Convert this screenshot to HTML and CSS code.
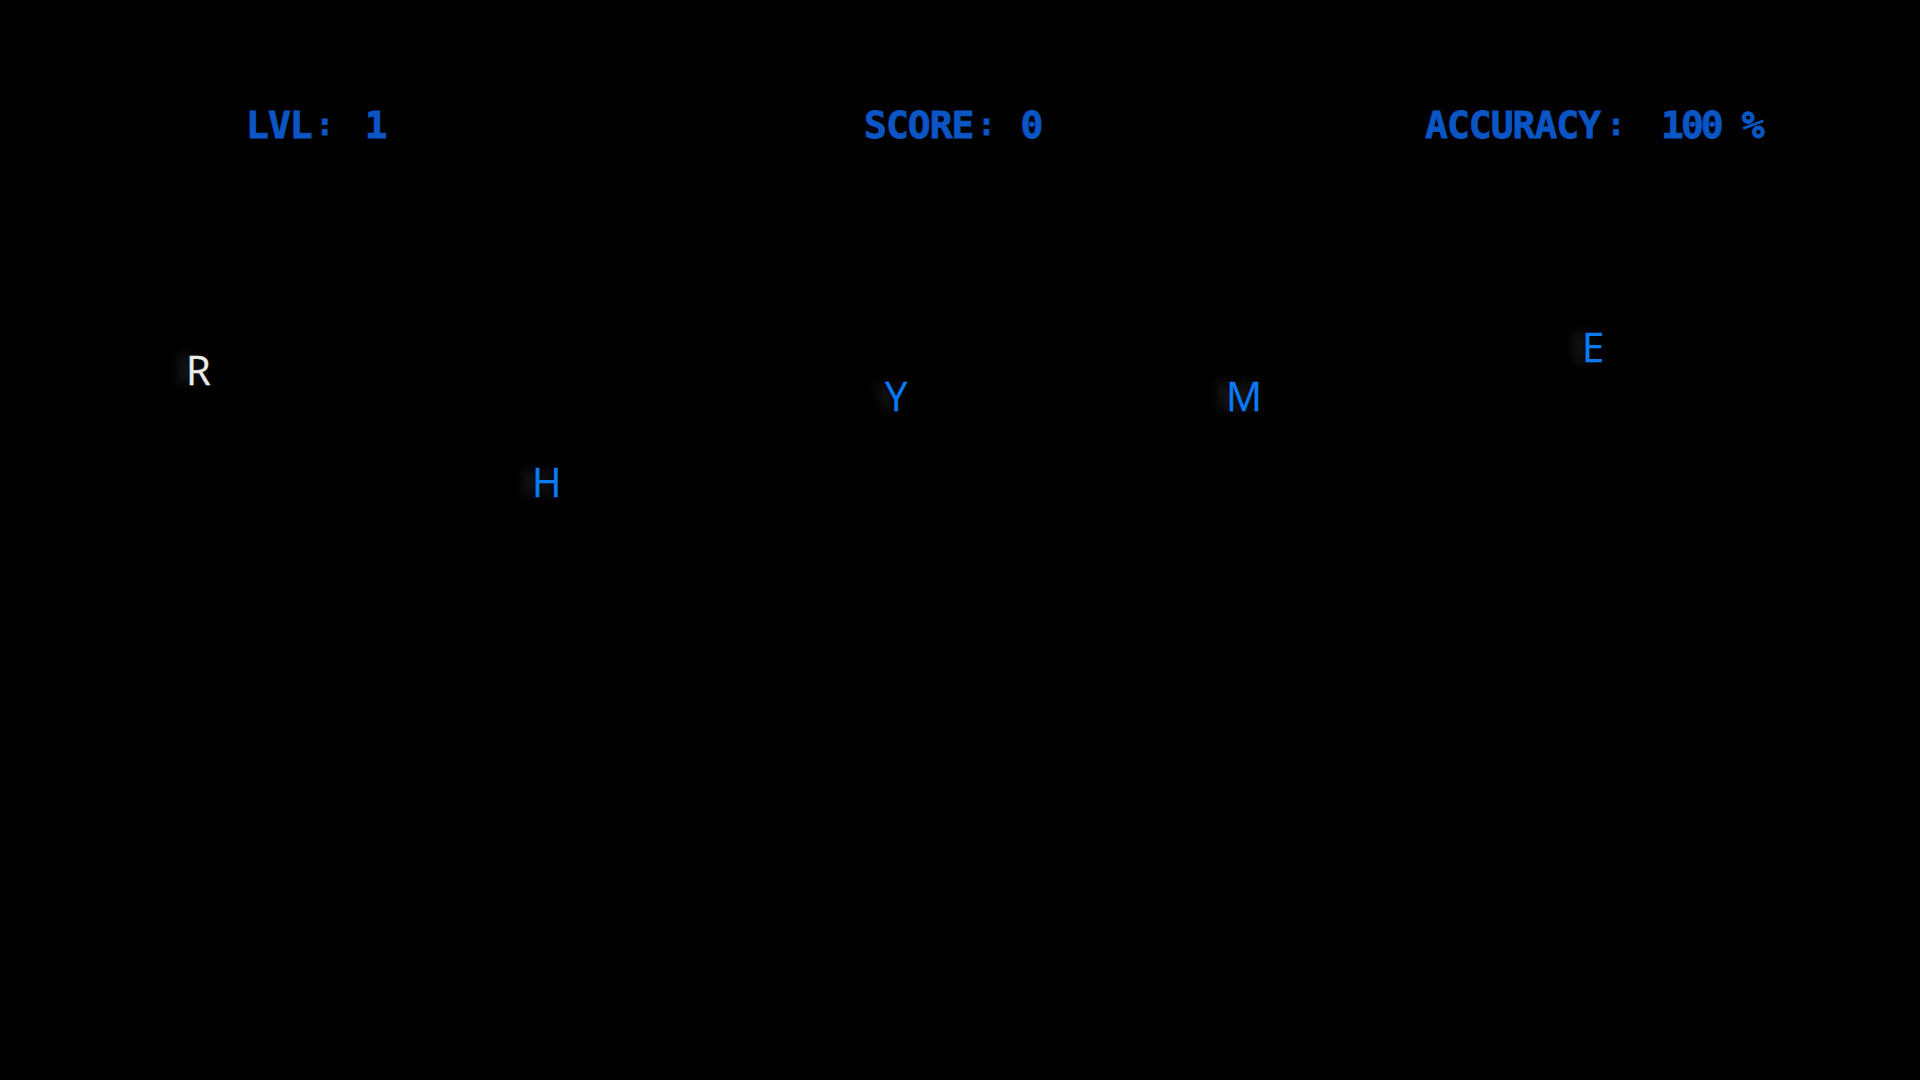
FILE: index.html

```html
<!DOCTYPE html>
<html lang="en">
<head>
    <meta charset="UTF-8">
    <title>Typing Game</title>
    <link rel="stylesheet" href="styles.css">
</head>
<body>
<div id="game">
    <div id="hud">
        <div class="stat stat-lvl"><span>LVL</span><span class="colon">:</span><span class="val">1</span></div>
        <div class="stat stat-score"><span>SCORE</span><span class="colon">:</span><span class="val">0</span></div>
        <div class="stat stat-acc"><span>ACCURACY</span><span class="colon">:</span><span class="val">100</span><span class="pct">%</span></div>
    </div>
    <span class="letter active l-r">R</span>
    <span class="letter l-h">H</span>
    <span class="letter l-y">Y</span>
    <span class="letter l-m">M</span>
    <span class="letter l-e">E</span>
</div>
</body>
</html>
```

FILE: styles.css

```css
* {
    margin: 0;
    padding: 0;
}

html, body {
    height: 100%;
    background: #000;
    overflow: hidden;
}

#game {
    position: relative;
    height: 1080px;
}

#hud {
    display: grid;
    grid-template-columns: 618px 561px auto;
    padding: 103px 0 0 246px;
    font-family: "DejaVu Sans Mono", monospace;
    font-weight: 700;
    font-size: 38px;
    line-height: 44px;
    letter-spacing: -1px;
    color: #0b55c4;
    -webkit-text-stroke: .8px #0b55c4;
}

.stat {
    display: flex;
}

.colon {
    margin-left: 4px;
    font-size: 30px;
}

.stat-lvl .val {
    margin-left: 32px;
}

.stat-score .val {
    margin-left: 26px;
}

.stat-acc .colon {
    margin-left: 7px;
}

.stat-acc .val {
    margin-left: 37px;
    letter-spacing: -3px;
}

.pct {
    margin-left: 21px;
}

.letter {
    position: absolute;
    font-family: "Open Sans", sans-serif;
    font-size: 40px;
    line-height: 54px;
    color: #0a7af5;
    -webkit-text-stroke: .3px currentColor;
    text-shadow: -10px 0 12px rgba(255, 255, 255, .18);
}

.letter.active {
    color: #ececec;
}

.l-r { left: 186px; top: 343px; }
.l-h { left: 532px; top: 455px; }
.l-y { left: 885px; top: 369px; }
.l-m { left: 1226px; top: 369px; }
.l-e { left: 1582px; top: 320px; }
```
